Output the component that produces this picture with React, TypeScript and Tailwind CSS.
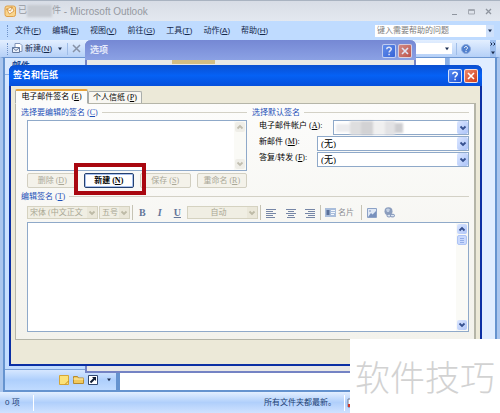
import React, { useState } from "react";
import type { ReactNode } from "react";

const UI = "font-['Liberation_Sans','Noto_Sans_CJK_SC',sans-serif]";
const MONO = "font-['Liberation_Serif','Noto_Sans_CJK_SC',serif]";

function Key({ children }: { children: string }) {
  return (
    <>
      (<span className="underline">{children}</span>)
    </>
  );
}

function Chevron({ up = false, color = "#35508f" }: { up?: boolean; color?: string }) {
  return (
    <svg viewBox="0 0 8 8" className="size-2 shrink-0" fill="none" stroke={color} strokeWidth="1.8">
      <path d={up ? "M1.5 5.5 4 3l2.5 2.5" : "M1.5 2.5 4 5l2.5-2.5"} />
    </svg>
  );
}

function Triangle() {
  return (
    <svg viewBox="0 0 6 4" className="h-1 w-1.5 shrink-0" fill="#1c2f52">
      <path d="M1 0.5h4L3 3.2z" />
    </svg>
  );
}

function CaptionButtons() {
  return (
    <div className="flex gap-0.5">
      <button aria-label="帮助" className="flex size-[14px] items-center justify-center rounded-xs border border-white/80 bg-linear-to-br from-[#5b8df0] to-[#1c4fd4]">
        <svg viewBox="0 0 10 10" className="size-2.5" fill="none" stroke="#fff" strokeWidth="1.5">
          <path d="M2.8 3.2C2.8 .8 7.3.7 7.3 3.1 7.3 4.7 5.1 4.6 5.1 6.6M5.1 7.8v1.5" />
        </svg>
      </button>
      <button aria-label="关闭" className="flex size-[14px] items-center justify-center rounded-xs border border-white/80 bg-linear-to-br from-[#ee8767] to-[#cf3a14]">
        <svg viewBox="0 0 10 10" className="size-2.5" fill="none" stroke="#fff" strokeWidth="1.6">
          <path d="m2 2 6 6M8 2 2 8" />
        </svg>
      </button>
    </div>
  );
}

function Legend({ children }: { children: ReactNode }) {
  return (
    <div className="flex h-[15px] shrink-0 items-center gap-1 whitespace-nowrap text-[#1d50b8]">
      <span>{children}</span>
      <span className="h-px flex-1 bg-[#d3d1c6]" />
    </div>
  );
}

function Field({ id, label, hot, value, wide = false }: { id: string; label: string; hot: string; value: string; wide?: boolean }) {
  return (
    <div className="flex h-4 items-start">
      <label htmlFor={id} className={`shrink-0 whitespace-nowrap pt-px leading-[10px] ${wide ? "w-[74px]" : "w-[58px]"}`}>
        {label} <Key>{hot}</Key>:
      </label>
      <div className="relative h-[15px] min-w-0 flex-1">
        <select id={id} className="block h-full w-full appearance-none border border-[#8fa9c9] bg-white px-[3px] text-[9px] leading-3">
          <option>{value}</option>
        </select>
        <span className="pointer-events-none absolute inset-y-px right-px flex w-[11px] items-center justify-center rounded-xs bg-linear-to-br from-[#dbe6ff] to-[#adc4f8]">
          <Chevron />
        </span>
        {wide && (
          <span className="pointer-events-none absolute inset-y-0 left-[3px] flex w-[68px] items-center blur-[1px]">
            <span className="h-2 w-[14px] bg-[#ececee]" />
            <span className="h-3.5 w-[11px] bg-[#dededf]" />
            <span className="h-3.5 w-3 bg-[#d2d2d4]" />
            <span className="h-3.5 w-3 bg-[#f0f0f0]" />
            <span className="h-3.5 w-2.5 bg-[#e2e2e4]" />
            <span className="h-2.5 w-2 bg-[#cdcdd0]" />
          </span>
        )}
      </div>
    </div>
  );
}

function DimSelect({ label, value, size, center = false }: { label: string; value: string; size: string; center?: boolean }) {
  return (
    <div className={`relative h-[13px] shrink-0 ${size}`}>
      <select aria-label={label} disabled className={`block h-full w-full appearance-none border border-[#d5d2c0] bg-[#f0eee3] pr-2.5 pl-0.5 leading-[11px] whitespace-pre text-[#a9a793] opacity-100 ${center ? "text-center" : ""}`}>
        <option>{value}</option>
      </select>
      <span className="pointer-events-none absolute inset-y-px right-px flex w-2.5 items-center justify-center bg-[#eae7d9]">
        <Chevron color="#bdbaa6" />
      </span>
    </div>
  );
}

function Push({ children, disabled = false }: { children: ReactNode; disabled?: boolean }) {
  return (
    <button
      disabled={disabled}
      className={`h-[15px] rounded-xs border leading-3 whitespace-nowrap ${disabled ? "border-[#d2cfc1] bg-[#f4f2ea] text-[#aaa898]" : "border-[#24406f] bg-white font-bold text-black shadow-[inset_0_0_0_1px_#a9c1ee]"}`}
    >
      {children}
    </button>
  );
}

function AlignIcon({ d }: { d: string }) {
  return (
    <svg viewBox="0 0 10 10" className="size-2.5" stroke="#7686a6" strokeWidth="1">
      <path d={d} />
    </svg>
  );
}

function Divider() {
  return <span className="h-[15px] w-px shrink-0 bg-[#c6c3b4]" />;
}

function Scrollbar({ dim = false, thumb = false }: { dim?: boolean; thumb?: boolean }) {
  const face = dim ? "bg-[#efeee8]" : "bg-linear-to-br from-[#dbe6ff] to-[#b0c6f8]";
  const color = dim ? "#c1beb0" : "#35508f";
  return (
    <div className="flex w-3 shrink-0 flex-col bg-[#fafaf6] p-px">
      <button aria-label="向上" disabled={dim} className={`flex h-2.5 items-center justify-center rounded-xs ${face}`}>
        <Chevron up color={color} />
      </button>
      {thumb && (
        <span className="mt-px flex h-2.5 items-center justify-center rounded-xs border border-[#aec4f5] bg-[#c9d9fd] text-[#93aee8]">
          <svg viewBox="0 0 4 5" className="h-[5px] w-1" stroke="currentColor"><path d="M0 .5h4M0 2.5h4M0 4.5h4" /></svg>
        </span>
      )}
      <span className="flex-1" />
      <button aria-label="向下" disabled={dim} className={`flex h-2.5 items-center justify-center rounded-xs ${face}`}>
        <Chevron color={color} />
      </button>
    </div>
  );
}

function Grip() {
  return <span className="h-3 border-l border-dotted border-[#6f92c8]" />;
}

const MENUS = [
  ["文件", "F"],
  ["编辑", "E"],
  ["视图", "V"],
  ["前往", "G"],
  ["工具", "T"],
  ["动作", "A"],
  ["帮助", "H"],
];

function SignatureDialog() {
  const [body, setBody] = useState("");
  return (
    <section aria-label="签名和信纸" className={`absolute top-[65px] right-[18px] bottom-[47px] left-[9px] flex flex-col rounded-t-md border-2 border-t-0 border-[#0b2fa4] bg-[#ece9d8] text-[8px] text-black ${MONO}`}>
      <header className="-mx-0.5 flex h-[21px] shrink-0 items-center justify-between rounded-t-md bg-linear-to-b from-[#0a4fd0] via-[#0561f5] to-[#0650dc] pr-1 pl-1">
        <h2 className="text-[9px] font-bold text-white">签名和信纸</h2>
        <CaptionButtons />
      </header>
      <div className="flex min-h-0 flex-1 flex-col px-1 pt-[3px] pb-6">
        <div role="tablist" className="flex items-end">
          <button role="tab" aria-selected="true" className="relative z-10 -mb-px h-[15px] w-[73px] rounded-t-xs border border-t-2 border-[#a9adab] border-t-[#e5a33d] border-b-[#fcfcfa] bg-[#fcfcfa] leading-3 whitespace-nowrap">
            电子邮件签名 <Key>E</Key>
          </button>
          <button role="tab" aria-selected="false" className="h-3 w-[54px] rounded-t-xs border border-b-0 border-[#a9adab] bg-[#f8f7f2] leading-[10px] whitespace-nowrap">
            个人信纸 <Key>P</Key>
          </button>
        </div>
        <div className="flex min-h-0 flex-1 flex-col border border-r-2 border-[#b5b5a8] bg-linear-to-b from-[#fcfcfb] to-[#f3f2ec] px-[5px] pb-[7px]">
          <div className="flex gap-[5px] pt-px">
            <div className="flex w-[226px] flex-col pb-px">
              <Legend>选择要编辑的签名 <Key>C</Key></Legend>
              <div className="ml-1.5 flex h-[51px] border border-[#8fa9c9] bg-white">
                <select size={3} aria-label="选择要编辑的签名" className="min-w-0 flex-1 appearance-none overflow-hidden bg-white" />
                <Scrollbar dim />
              </div>
              <div className="relative mt-0.5 ml-1.5 grid grid-cols-4 gap-1.5">
                <Push disabled>删除 <Key>D</Key></Push>
                <Push>新建 <Key>N</Key></Push>
                <Push disabled>保存 <Key>S</Key></Push>
                <Push disabled>重命名 <Key>R</Key></Push>
                <span className="pointer-events-none absolute -top-2.5 left-[47px] h-8 w-[72px] border-4 border-[#a90710]" />
              </div>
            </div>
            <div className="flex min-w-0 flex-1 flex-col">
              <Legend>选择默认签名</Legend>
              <div className="flex flex-col pl-[7px]">
                <Field id="account" label="电子邮件帐户" hot="A" value="" wide />
                <Field id="fresh" label="新邮件" hot="M" value="(无)" />
                <Field id="reply" label="答复/转发" hot="F" value="(无)" />
              </div>
            </div>
          </div>
          <Legend>编辑签名 <Key>T</Key></Legend>
          <div className="flex min-h-0 flex-1 flex-col pl-1.5">
            <div className="mb-px flex h-[17px] shrink-0 items-center text-[#8a8d92]">
              <DimSelect label="字体" value="宋体  (中文正文" size="w-[71px]" />
              <span className="w-px" />
              <DimSelect label="字号" value="五号" size="w-[31px]" />
              <span className="w-0.5" />
              <Divider />
              <div className="flex flex-1 items-center">
                <div className="flex w-[54px] items-center justify-around text-[10px] font-bold text-[#64769a]">
                  <button aria-label="加粗">B</button>
                  <button aria-label="倾斜" className="italic">I</button>
                  <button aria-label="下划线" className="underline">U</button>
                </div>
                <DimSelect label="颜色" value="自动" size="w-[71px]" center />
                <span className="w-0.5" />
                <Divider />
                <div className="flex w-[59px] items-center justify-between px-[5px]">
                  <button aria-label="左对齐"><AlignIcon d="M0 1.5h10M0 3.5h7M0 5.5h10M0 7.5h7M0 9.5h9" /></button>
                  <button aria-label="居中"><AlignIcon d="M0 1.5h10M2 3.5h6M0 5.5h10M2 7.5h6M1 9.5h8" /></button>
                  <button aria-label="右对齐"><AlignIcon d="M0 1.5h10M3 3.5h7M0 5.5h10M3 7.5h7M1 9.5h9" /></button>
                </div>
                <Divider />
                <button className="flex w-10 items-center gap-0.5 pl-1 whitespace-nowrap">
                  <svg viewBox="0 0 11 9" className="h-[9px] w-[11px] shrink-0">
                    <path d="M0 0h11v9H0z" fill="#a9bddb" />
                    <path d="M1.5 2h3v5h-3z" fill="#5a7099" />
                    <path d="M6 2.5h4M6 4.5h4M6 6.5h3" stroke="#f3f7fd" />
                  </svg>
                  名片
                </button>
                <Divider />
                <div className="flex items-center gap-[7px] pl-[5px]">
                  <button aria-label="图片">
                    <svg viewBox="0 0 10 10" className="size-2.5">
                      <path d="M.5.5h9v9h-9z" fill="#dfe8f5" stroke="#8da2c6" />
                      <path d="m1 9 3-4 1.5 1.5L9 3v6z" fill="#7891bd" />
                      <circle cx="3" cy="3" r="1" fill="#9fb2d3" />
                    </svg>
                  </button>
                  <button aria-label="超链接">
                    <svg viewBox="0 0 11 11" className="size-[11px]">
                      <circle cx="4.5" cy="4.2" r="4" fill="#8b9dbd" />
                      <path d="M2 2.5q2-2 4 0L5 5H3z" fill="#c3d0e4" />
                      <rect x="3" y="7.3" width="4" height="2.6" rx="1.3" fill="#dce5f2" stroke="#7c90b5" />
                      <rect x="6.5" y="7.3" width="4" height="2.6" rx="1.3" fill="#dce5f2" stroke="#7c90b5" />
                    </svg>
                  </button>
                </div>
              </div>
            </div>
            <div className="flex min-h-0 flex-1 border border-[#8fa9c9] bg-white">
              <textarea aria-label="编辑签名" value={body} onChange={(e) => setBody(e.target.value)} className="min-w-0 flex-1 resize-none overflow-hidden outline-none" />
              <Scrollbar thumb />
            </div>
          </div>
        </div>
      </div>
    </section>
  );
}

export default function App() {
  return (
    <div className={`relative flex h-screen flex-col overflow-hidden bg-[#bfdbff] text-[8px] text-[#15284b] ${UI}`}>
      <header className="flex h-[21px] shrink-0 items-center gap-0.5 border-t border-[#a9b3c1] bg-linear-to-b from-[#d8dde6] to-[#e3e8f0] pr-2 pl-1 text-[10px] text-[#9599a1]">
        <svg viewBox="0 0 12 12" className="size-3">
          <rect x="1" y="1" width="10.5" height="10.5" rx="2" fill="#f9d48c" stroke="#dfa04a" />
          <path d="M2.5 4 8 2l2 4-4.5 3z" fill="#fffaf0" stroke="#d08f3a" strokeWidth=".8" />
          <path d="m2.5 4 4 2L8 2" fill="none" stroke="#d08f3a" strokeWidth=".8" />
        </svg>
        <h1 className="flex flex-1 items-center whitespace-nowrap">
          <span className="text-[9px]">已</span>
          <span className="h-3 w-[25px] bg-[#c6cad1] blur-[1px]" />
          <span className="text-[9px]">件</span>
          <span className="whitespace-pre"> - Microsoft Outlook</span>
        </h1>
        <div className="flex gap-2.5">
          <button aria-label="最小化"><svg viewBox="0 0 7 7" className="size-[7px]" stroke="#8f959f"><path d="M1 6.5h5" /></svg></button>
          <button aria-label="最大化"><svg viewBox="0 0 7 7" className="size-[7px]" stroke="#a4a9b2" fill="none"><path d="M.5 1.5h6V6h-6zM.5 2.5h6" /></svg></button>
          <button aria-label="关闭窗口"><svg viewBox="0 0 7 7" className="size-[7px]" stroke="#8f959f" strokeWidth="1.3"><path d="m1 1 5 5M6 1 1 6" /></svg></button>
        </div>
      </header>

      <nav className="flex h-[19px] shrink-0 items-center pr-1.5 pl-[7px]">
        <Grip />
        <div className="flex flex-1 gap-[11px] pl-[7px] whitespace-nowrap">
          {MENUS.map(([name, hot]) => (
            <button key={hot}>
              {name}<Key>{hot}</Key>
            </button>
          ))}
        </div>
        <div className="flex h-3 w-[119px] items-center bg-white">
          <input aria-label="帮助" placeholder="键入需要帮助的问题" className="h-full min-w-0 flex-1 px-0.5 placeholder:text-[#7b7b7b]" />
          <span className="flex h-full w-2 items-center justify-center bg-[#cfe1fb]"><Triangle /></span>
        </div>
      </nav>

      <div className="flex h-[17px] shrink-0 items-center bg-linear-to-b from-[#e3efff] to-[#b5d0f7] pr-1 pl-[7px]">
        <Grip />
        <button className="flex items-center gap-0.5 pl-1 whitespace-nowrap">
          <svg viewBox="0 0 11 11" className="size-[11px]">
            <path d="M3 .5h5l2 2v6H3z" fill="#fff" stroke="#7f93b8" />
            <path d="M.5 4.5h7v5h-7z" fill="#e9eef8" stroke="#62799f" />
            <path d="m.5 4.500 3.500 3 3.500-3" fill="none" stroke="#62799f" />
          </svg>
          <span>新建<Key>N</Key></span>
        </button>
        <span className="w-[5px]" />
        <Triangle />
        <span className="mx-1 h-3 w-px bg-[#9fbde8]" />
        <button aria-label="删除">
          <svg viewBox="0 0 9 9" className="size-[9px]" stroke="#8691a6" strokeWidth="1.5"><path d="m1 1 7 7M8 1 1 8" /></svg>
        </button>
        <span className="flex-1" />
        <span className="flex h-[11px] w-[38px] items-center justify-end bg-white pr-0.5"><Triangle /></span>
        <span className="mx-1 h-3 w-px bg-[#9fbde8]" />
        <button aria-label="Outlook 帮助">
          <svg viewBox="0 0 10 10" className="size-2.5">
            <circle cx="5" cy="5" r="4.5" fill="#4f7fcd" stroke="#8aa9dd" />
            <path d="M3.5 4c0-2 3-2 3 0 0 1-1.5 1-1.5 2.2M5 7v1.2" fill="none" stroke="#fff" />
          </svg>
        </button>
        <button aria-label="工具栏选项" className="ml-[19px] flex h-full w-1.5 flex-col items-center justify-between bg-[#9fc0ef] py-0.5">
          <svg viewBox="0 0 6 4" className="h-1 w-1.5" fill="none" stroke="#1c2f52"><path d="m.5.5 1.500 1.500L.5 3.500M3.500.5 5 2 3.500 3.500" /></svg>
          <Triangle />
        </button>
      </div>

      <main className="flex min-h-0 flex-1 border-x-[3px] border-t border-x-[#aac6ee] border-t-[#6c96d1]">
        <div className="flex flex-1 border-x-2 border-b-2 border-[#6593cf]">
          <aside className="flex w-[111px] flex-col justify-between bg-linear-to-b from-[#d8e8fe] to-[#bfdbff]">
            <h3 className="border-b border-[#8db2e6] pl-[7px] text-[9px] leading-4 font-bold text-[#1e4a91]">邮件</h3>
            <div className="flex h-[21px] items-center justify-end gap-1 border-t border-[#7da3d9] bg-linear-to-b from-[#d6e7ff] via-[#aecffc] to-[#c0dbff] pr-1">
              <svg viewBox="0 0 10 10" className="size-2.5"><path d="M.5.5h9v9h-9z" fill="#fbe27a" stroke="#d5a637" /><path d="m6 9.5 3.5-3.5" stroke="#c58b1e" /></svg>
              <svg viewBox="0 0 11 10" className="h-2.5 w-[11px]"><path d="M.5 8.5v-7h4l1 1.5h5v5.5z" fill="#f1c95d" stroke="#b58a2e" /><path d="M.5 4h10" stroke="#fff0b5" /></svg>
              <svg viewBox="0 0 10 10" className="size-2.5"><path d="M.5.5h9v9h-9z" fill="#fff" stroke="#30476f" /><path d="m2.5 7.5 4-4" stroke="#101c33" strokeWidth="2" /><path d="M4 2h4v4z" fill="#101c33" /></svg>
              <span className="pl-1"><Triangle /></span>
            </div>
          </aside>
          <span className="w-1 bg-[#6593cf]" />
          <div className="flex-1 bg-white" />
          <span className="w-1 bg-[#8bb0e6]" />
          <div className="w-[46px] border-l border-[#9fc0ef] bg-[#e0edff]" />
        </div>
      </main>

      <footer className="flex h-[21px] shrink-0 items-center bg-linear-to-b from-[#e3efff] via-[#b0cffb] to-[#cfe2ff] pl-[5px] text-[#213f73]">
        <span className="w-7">0 项</span>
        <span className="h-4 w-px bg-white" />
        <span className="flex-1" />
        <span className="pr-2">所有文件夹都最新。</span>
        <span className="h-4 w-px bg-white" />
        <span className="w-[155px] pl-0.5">
          <svg viewBox="0 0 8 10" className="h-2.5 w-2"><path d="M1 1h6v8H1z" fill="#fff" stroke="#6e7d98" /><path d="M1 6h6v3H1z" fill="#d33a2c" /></svg>
        </span>
      </footer>

      <section aria-label="选项" className="absolute top-10 right-[84px] bottom-10 left-[85px] rounded-t-md border-2 border-t-0 border-[#7483c4] bg-[#e9e8e6]">
        <header className="-mx-0.5 flex h-5 items-center justify-between rounded-t-md bg-linear-to-b from-[#7588d4] to-[#8ba1e4] pt-0.5 pr-1 pl-[5px]">
          <h2 className="text-[9px] font-bold text-[#e4e9fa]">选项</h2>
          <div className="opacity-75"><CaptionButtons /></div>
        </header>
        <div className="ml-[85px] h-4 w-[43px] border-t-4 border-[#d3bd83]" />
      </section>

      <SignatureDialog />

      <div className="absolute right-0 bottom-0 flex h-[74px] w-[150px] items-center justify-center bg-white font-['Noto_Sans_CJK_SC',sans-serif] text-[35px] font-light whitespace-nowrap text-[#d2d2d2]">
        软件技巧
      </div>
    </div>
  );
}
